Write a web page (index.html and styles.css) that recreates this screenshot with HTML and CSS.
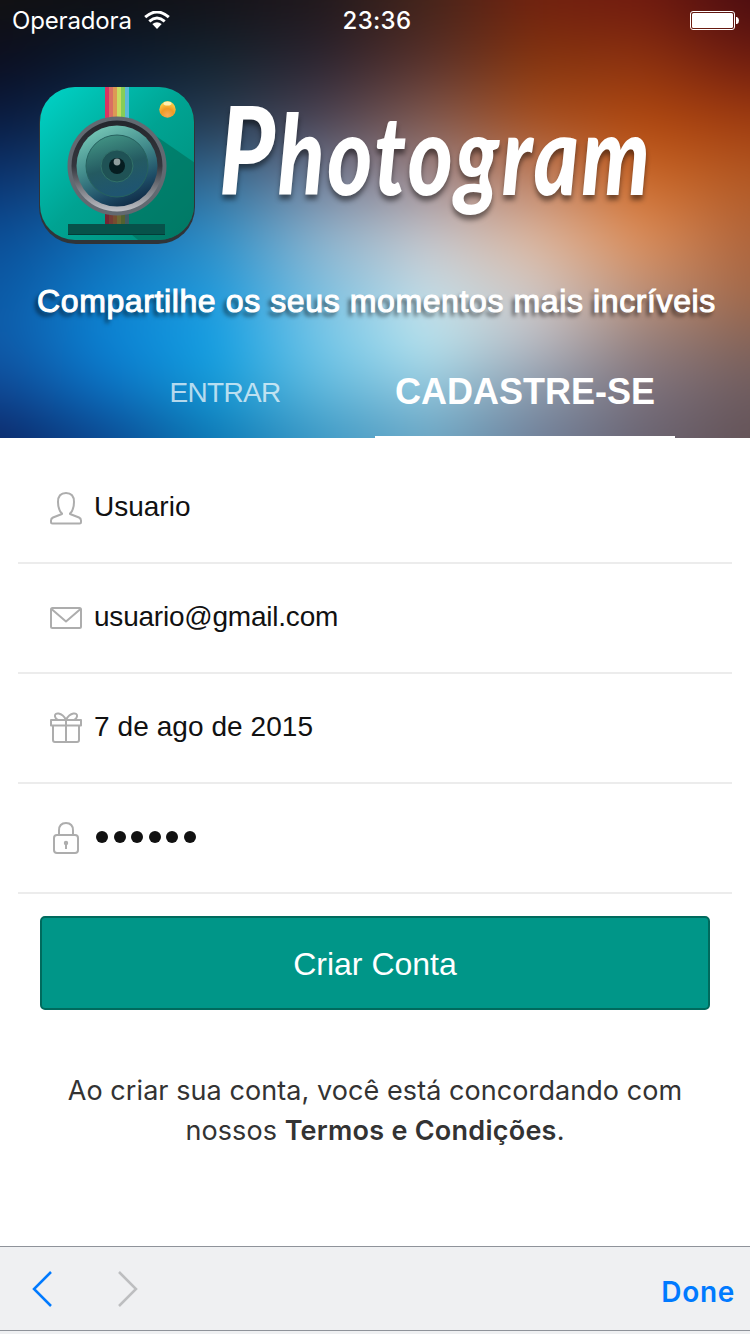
FILE: index.html
```html
<!DOCTYPE html>
<html lang="pt-BR">
<head>
<meta charset="utf-8">
<title>Photogram</title>
<link rel="stylesheet" href="styles.css">
</head>
<body>
<div class="screen">
  <header class="hero">
    <div class="backdrop">
      <i class="band b0"></i><i class="band b1"></i><i class="band b2"></i><i class="band b3"></i><i class="band b4"></i><i class="band b5"></i><i class="band b6"></i><i class="band b7"></i><i class="band b8"></i>
    </div>
    <div class="status">
      <div class="carrier"><span>Operadora</span>
        <svg class="wifi" width="26" height="19" viewBox="0 0 26 19" fill="none" stroke="#fff" stroke-width="3"><path d="M1.2 6.2Q13-4.2 24.8 6.2M5.3 10.3Q13 3.7 20.7 10.3"/><path fill="#fff" stroke="none" d="M8.3 13.1Q13 9.4 17.7 13.1L13 18Z"/></svg>
      </div>
      <span class="clock">23:36</span>
      <svg class="battery" width="50" height="20" viewBox="0 0 50 20"><rect x=".5" y=".5" width="44" height="18" rx="2.500" fill="none" stroke="#fff"/><rect x="2" y="2" width="41" height="15" rx="1.500" fill="#fff"/><path fill="#fff" d="M46 6h1q2 1 2 3.500T47 13h-1z"/></svg>
    </div>
    <div class="brand">
      <svg class="app-icon" width="160" height="164" viewBox="0 0 160 164">
        <defs>
          <linearGradient id="body" x1="0" y1="0" x2="1" y2="1"><stop offset="0" stop-color="#00d4c8"/><stop offset=".5" stop-color="#00a392"/><stop offset="1" stop-color="#008c78"/></linearGradient>
          <linearGradient id="rim" x1="0" y1="0" x2="0" y2="1"><stop offset="0" stop-color="#24272d"/><stop offset=".5" stop-color="#34363d"/><stop offset="1" stop-color="#c0c2c8"/></linearGradient>
          <linearGradient id="glass" x1=".2" y1="0" x2=".65" y2="1"><stop offset="0" stop-color="#79cbb9"/><stop offset=".45" stop-color="#438c8c"/><stop offset=".8" stop-color="#1d4b65"/><stop offset="1" stop-color="#102b46"/></linearGradient>
          <linearGradient id="inner" x1="0" y1="0" x2=".3" y2="1"><stop offset="0" stop-color="#479d8a"/><stop offset=".6" stop-color="#245a61"/><stop offset="1" stop-color="#1f5570"/></linearGradient>
          <radialGradient id="flash" cx=".5" cy=".85" r=".8"><stop offset="0" stop-color="#f7ac58"/><stop offset=".5" stop-color="#f09a25"/><stop offset="1" stop-color="#ffd34b"/></radialGradient>
          <clipPath id="shell"><rect x="3" y="3" width="154" height="153" rx="35"/></clipPath>
        </defs>
        <rect x="2" y="3" width="156" height="157" rx="37" fill="#303438"/>
        <rect x="3" y="3" width="154" height="153" rx="35" fill="url(#body)"/>
        <g clip-path="url(#shell)">
          <path d="M116 50L158 79V160H106L67 128Z" fill="#006c58" opacity=".6"/>
          <g>
            <path fill="#d83562" d="M68 3h4v138h-4z"/><path fill="#d96f62" d="M72 3h4v138h-4z"/><path fill="#dc9a55" d="M76 3h4v138h-4z"/><path fill="#c6dc60" d="M80 3h4v138h-4z"/><path fill="#86cd57" d="M84 3h4v138h-4z"/><path fill="#5bb9d8" d="M88 3h4v138h-4z"/>
          </g>
          <path d="M68 126H92V141H68Z" fill="#301a16" opacity=".6"/>
        </g>
        <path d="M31 140h97v11H31z" fill="#07524a"/><path d="M31 150h97v1H31z" fill="#033c38"/>
        <circle cx="80" cy="82" r="49.500" fill="#626971"/>
        <circle cx="80" cy="82" r="45.500" fill="url(#rim)"/>
        <circle cx="80" cy="82" r="40.500" fill="url(#glass)"/>
        <circle cx="80" cy="82" r="31" fill="url(#inner)" stroke="#26625f"/>
        <circle cx="80" cy="82" r="16" fill="#1f5255" stroke="#327169"/>
        <circle cx="80" cy="82" r="8" fill="#061d20"/>
        <circle cx="80" cy="78" r="3.400" fill="#909e9e"/>
        <circle cx="130.500" cy="25.500" r="8.200" fill="url(#flash)"/><ellipse cx="130.500" cy="19.500" rx="4" ry="2" fill="#fff0b0"/>
      </svg>
      <h1 class="wordmark"><span>Photogram</span></h1>
    </div>
    <p class="tagline">Compartilhe os seus momentos mais incríveis</p>
    <nav class="tabs">
      <a class="tab">ENTRAR</a>
      <a class="tab active">CADASTRE-SE</a>
    </nav>
  </header>

  <main class="form">
    <div class="field">
      <svg class="glyph" viewBox="0 0 34 34"><path d="M13 22.500Q9 19 9 11 9 2 17 2T25 11Q25 19 21 22.500V23L30 26.500Q32 27.500 32 29.500V31Q32 32.500 30.500 32.500H3.500Q2 32.500 2 31V29.500Q2 27.500 4 26.500L13 23Z"/></svg>
      <span class="value">Usuario</span>
    </div>
    <div class="field">
      <svg class="glyph" viewBox="0 0 34 34"><rect x="2" y="7" width="30" height="20" rx="1.500"/><path d="M2.500 8L17 20.500 31.500 8"/></svg>
      <span class="value mail">usuario@gmail.com</span>
    </div>
    <div class="field">
      <svg class="glyph" viewBox="0 0 34 34"><path d="M2 9h30v5.500H2zM4 14.500V29Q4 31 6 31H28Q30 31 30 29V14.500M17 9V31M17 9C13 1 5 1 6 5.500Q6.500 8 9 9M17 9C21 1 29 1 28 5.500Q27.500 8 25 9"/></svg>
      <span class="value date">7 de ago de 2015</span>
    </div>
    <div class="field">
      <svg class="glyph" viewBox="0 0 34 34"><rect x="5" y="14" width="24" height="18" rx="3"/><path d="M10 14V9.500Q10 2 17 2T24 9.500V14M17 23v5"/><circle cx="17" cy="22" r="1.200"/></svg>
      <span class="dots"><i></i><i></i><i></i><i></i><i></i><i></i></span>
    </div>
    <button class="submit">Criar Conta</button>
    <p class="terms">Ao criar sua conta, você está concordando com<br>nossos <b>Termos e Condições</b>.</p>
  </main>

  <footer class="accessory">
    <svg class="prev" width="22" height="38" viewBox="0 0 22 38"><path d="M19 2L2 19 19 36"/></svg>
    <svg class="next" width="22" height="38" viewBox="0 0 22 38"><path d="M3 2L20 19 3 36"/></svg>
    <span class="done">Done</span>
  </footer>
  <div class="edge"></div>
</div>
</body>
</html>
```
FILE: styles.css
```css
* { box-sizing: border-box; }
body { margin: 0; background: #fff; font-family: "Liberation Sans", Arial, sans-serif; }
.screen { width: 750px; height: 1334px; display: flex; flex-direction: column; overflow: hidden; }

.hero { position: relative; height: 438px; display: flex; flex-direction: column; color: #fff; isolation: isolate; overflow: hidden; }

/* Colour mesh: each band fades in over the one above it. */
.backdrop { position: absolute; inset: -60px; z-index: -1; filter: blur(22px); }
.band { position: absolute; inset: 0; background: linear-gradient(90deg, var(--c0) 60px, var(--c1) 167px, var(--c2) 274px, var(--c3) 381px, var(--c4) 488px, var(--c5) 595px, var(--c6) 702px, var(--c7) 810px); -webkit-mask-image: linear-gradient(transparent var(--from), #000 var(--to)); mask-image: linear-gradient(transparent var(--from), #000 var(--to)); }
.b0 { -webkit-mask-image: none; mask-image: none; --c0: #121212; --c1: #0f1014; --c2: #141218; --c3: #20181c; --c4: #44241a; --c5: #70210f; --c6: #701a0f; --c7: #4a0c10; }
.b1 { --from: 60px; --to: 120px; --c0: #0c0e20; --c1: #0a1a30; --c2: #142430; --c3: #2c2430; --c4: #57302a; --c5: #84350f; --c6: #8c3210; --c7: #6f1c10; }
.b2 { --from: 120px; --to: 180px; --c0: #0a1c42; --c1: #143050; --c2: #273c52; --c3: #4d4454; --c4: #825a50; --c5: #a85020; --c6: #b0480f; --c7: #a03c0f; }
.b3 { --from: 180px; --to: 240px; --c0: #0c3572; --c1: #1c5080; --c2: #356d96; --c3: #74809a; --c4: #a08d92; --c5: #bf8468; --c6: #cc6a2a; --c7: #b45a24; }
.b4 { --from: 240px; --to: 300px; --c0: #0c4f98; --c1: #0f70b8; --c2: #3090c8; --c3: #8fb5cf; --c4: #c8c8ce; --c5: #deb8a0; --c6: #de905c; --c7: #b0653c; }
.b5 { --from: 300px; --to: 360px; --c0: #0c5aa6; --c1: #0f80cc; --c2: #209bdc; --c3: #7cc0e0; --c4: #c4dee8; --c5: #cdc8c8; --c6: #b8907c; --c7: #a0684a; }
.b6 { --from: 360px; --to: 400px; --c0: #0f5caa; --c1: #0b84d6; --c2: #14a0e4; --c3: #74c8ea; --c4: #bae6f0; --c5: #bcbcc4; --c6: #98827e; --c7: #866458; }
.b7 { --from: 400px; --to: 450px; --c0: #0f4894; --c1: #0c70c0; --c2: #149ad6; --c3: #60b8dc; --c4: #92c6dc; --c5: #8a9aac; --c6: #7c727e; --c7: #6e5c60; }
.b8 { --from: 450px; --to: 498px; --c0: #0c2868; --c1: #0c4890; --c2: #0c78b4; --c3: #3c98c4; --c4: #6aa6c4; --c5: #70809a; --c6: #6a6472; --c7: #645256; }

.status { height: 40px; display: grid; grid-template-columns: 1fr auto 1fr; align-items: center; padding: 1px 10px 0 12px; font-family: "Inter", sans-serif; font-size: 24px; }
.carrier { display: flex; align-items: center; gap: 12px; letter-spacing: -.15px; }
.clock { font-weight: 500; letter-spacing: .3px; padding-left: 2px; }
.battery { justify-self: end; }

.brand { display: flex; height: 206px; padding: 44px 0 0 37px; }
.wordmark { width: 430px; margin: -4px 0 0 22px; font: italic 900 110px/136px "Lato", cursive; text-shadow: 0 5px 6px rgba(0,0,0,.45); }
.wordmark span { display: block; transform: scaleX(.78); transform-origin: 0 0; white-space: nowrap; letter-spacing: 3.500px; }
.wordmark span::first-letter { font-size: 122px; }
.tagline { margin: 37px 0 0 37px; height: 36px; line-height: 36px; font-size: 32px; letter-spacing: .61px; -webkit-text-stroke: 1px #fff; white-space: nowrap; text-shadow: -3px 4px 4px rgba(0,0,0,.65); }
.tabs { display: grid; grid-template-columns: 300px 300px; justify-content: center; margin-top: auto; height: 92px; }
.tab { display: flex; align-items: center; justify-content: center; font-size: 28px; letter-spacing: -.7px; padding-top: 1px; color: rgba(255,255,255,.7); }
.tab.active { color: #fff; font-size: 36px; font-weight: 700; letter-spacing: 0; border-bottom: 2px solid #fff; padding-top: 2px; }

.form { flex: 1; }
.field { display: flex; align-items: center; height: 110px; margin: 0 18px; padding: 0 0 2px 31px; border-bottom: 2px solid #ececec; gap: 11px; }
.field:first-child { height: 126px; padding: 14px 0 0 31px; }
.glyph { width: 34px; height: 34px; margin-top: 2px; fill: none; stroke: #adadad; stroke-width: 2; stroke-linejoin: round; }
.value { font-size: 28px; line-height: 34px; color: #111; }
.mail { letter-spacing: -.22px; }
.date { letter-spacing: .07px; }
.dots { display: flex; gap: 5.500px; padding-left: 2px; }
.dots i { width: 12px; height: 12px; border-radius: 50%; background: #111; }
.submit { display: block; width: 670px; height: 94px; margin: 22px auto 0; padding: 2px 0 0; border: 2px solid #006a5d; border-radius: 5px; background: #009688; color: #fff; font: 32px "Liberation Sans", Arial, sans-serif; }
.terms { margin: 61px 0 0; text-align: center; font: 27px/40px "Inter", sans-serif; letter-spacing: .07px; color: #333; white-space: nowrap; }
.terms b { font-weight: 600; letter-spacing: .25px; }

.accessory { height: 85px; display: flex; align-items: center; padding: 0 15px 0 32px; background: #eff0f2; border-top: 1px solid #8f939a; border-bottom: 1px solid #8f939a; }
.accessory svg { fill: none; stroke-width: 2.500; }
.prev { stroke: #007aff; }
.next { stroke: #bdbec0; margin-left: 62px; }
.done { margin-left: auto; padding-top: 6px; font: 600 28px "Inter", sans-serif; letter-spacing: .7px; color: #007aff; }
.edge { height: 3px; background: #eff0f2; }
```
